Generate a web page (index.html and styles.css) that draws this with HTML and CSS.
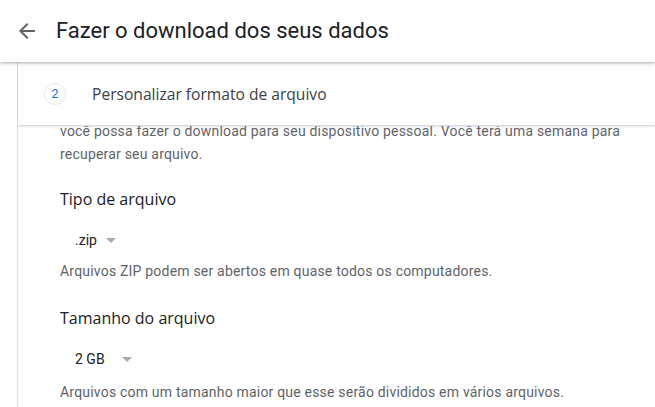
FILE: index.html
```html
<!DOCTYPE html>
<html lang="pt-BR">

<head>
  <meta charset="UTF-8">
  <meta name="viewport" content="width=device-width, initial-scale=1.0">
  <title>Fazer o download dos seus dados</title>
  <link rel="stylesheet" href="styles.css">
</head>

<body>
  <header class="topbar">
    <svg class="topbar__back" width="24" height="24" viewBox="0 0 24 24">
      <path d="M20 11H7.83l5.59-5.59L12 4l-8 8 8 8 1.41-1.41L7.83 13H20v-2z" fill="#5f6368" />
    </svg>
    <h1 class="topbar__title">Fazer o download dos seus dados</h1>
  </header>

  <main class="card">
    <div class="step">
      <span class="step__num">2</span>
      <span class="step__title">Personalizar formato de arquivo</span>
    </div>

    <div class="step__body">
      <p class="note">você possa fazer o download para seu dispositivo pessoal. Você terá uma semana para recuperar seu arquivo.</p>

      <section class="option">
        <h2 class="option__label">Tipo de arquivo</h2>
        <div class="select">
          <span class="select__value">.zip</span>
          <span class="select__arrow"></span>
        </div>
        <p class="note">Arquivos ZIP podem ser abertos em quase todos os computadores.</p>
      </section>

      <section class="option">
        <h2 class="option__label">Tamanho do arquivo</h2>
        <div class="select select--wide">
          <span class="select__value">2 GB</span>
          <span class="select__arrow"></span>
        </div>
        <p class="note">Arquivos com um tamanho maior que esse serão divididos em vários arquivos.</p>
      </section>
    </div>
  </main>
</body>

</html>
```

FILE: styles.css
```css
html,
body {
  height: 100%;
  box-sizing: border-box;
}

body {
  margin: 0;
  font-family: Roboto, "Liberation Sans", sans-serif;
  color: #202124;
  background: #fff;
  overflow: hidden;
}

.topbar {
  height: 62px;
  display: flex;
  align-items: center;
  padding-left: 15px;
  gap: 17px;
  box-shadow: 0 1px 2px rgba(60, 64, 67, 0.3), 0 2px 5px rgba(60, 64, 67, 0.15);
  position: relative;
  z-index: 2;
}

.topbar__back {
  flex: none;
}

.topbar__title {
  margin: 0;
  font-size: 22px;
  font-weight: 400;
  color: #202124;
  padding-bottom: 2px;
}

.card {
  margin-left: 17px;
  border-left: 1px solid #dadce0;
  height: 100%;
}

.step {
  height: 63px;
  display: flex;
  align-items: center;
  padding-left: 26px;
  gap: 26px;
  border-bottom: 1px solid #dadce0;
  box-shadow: 0 1px 2px rgba(60, 64, 67, 0.15);
  position: relative;
  z-index: 1;
}

.step__num {
  width: 22px;
  height: 22px;
  box-sizing: border-box;
  border: 1px solid #e8eaed;
  border-radius: 50%;
  display: flex;
  align-items: center;
  justify-content: center;
  font-size: 13px;
  color: #1a73e8;
}

.step__title {
  font-family: "Open Sans", Roboto, sans-serif;
  font-size: 15.6px;
  font-weight: 500;
  color: #3c4043;
}

.step__body {
  padding: 0 20px 0 42px;
}

.note {
  margin: 0;
  font-size: 14px;
  letter-spacing: 0.2px;
  line-height: 23px;
  color: #5f6368;
}

.step__body > .note {
  margin-top: -6px;
}

.option {
  margin-top: 22px;
}

.option + .option {
  margin-top: 24px;
}

.option__label {
  margin: 0;
  font-family: "Open Sans", Roboto, sans-serif;
  font-size: 16px;
  font-weight: 500;
  line-height: 22px;
  color: #202124;
}

.select {
  display: flex;
  align-items: center;
  gap: 9px;
  height: 40px;
  margin: 10px 0 0;
  padding-left: 15px;
}

.select--wide {
  gap: 17px;
}

.select__value {
  font-size: 14px;
  color: #202124;
}

.select__arrow {
  width: 0;
  height: 0;
  border-left: 5.5px solid transparent;
  border-right: 5.5px solid transparent;
  border-top: 5.5px solid #a9acaf;
}

.option:last-child .note {
  margin-top: 2px;
}
```
